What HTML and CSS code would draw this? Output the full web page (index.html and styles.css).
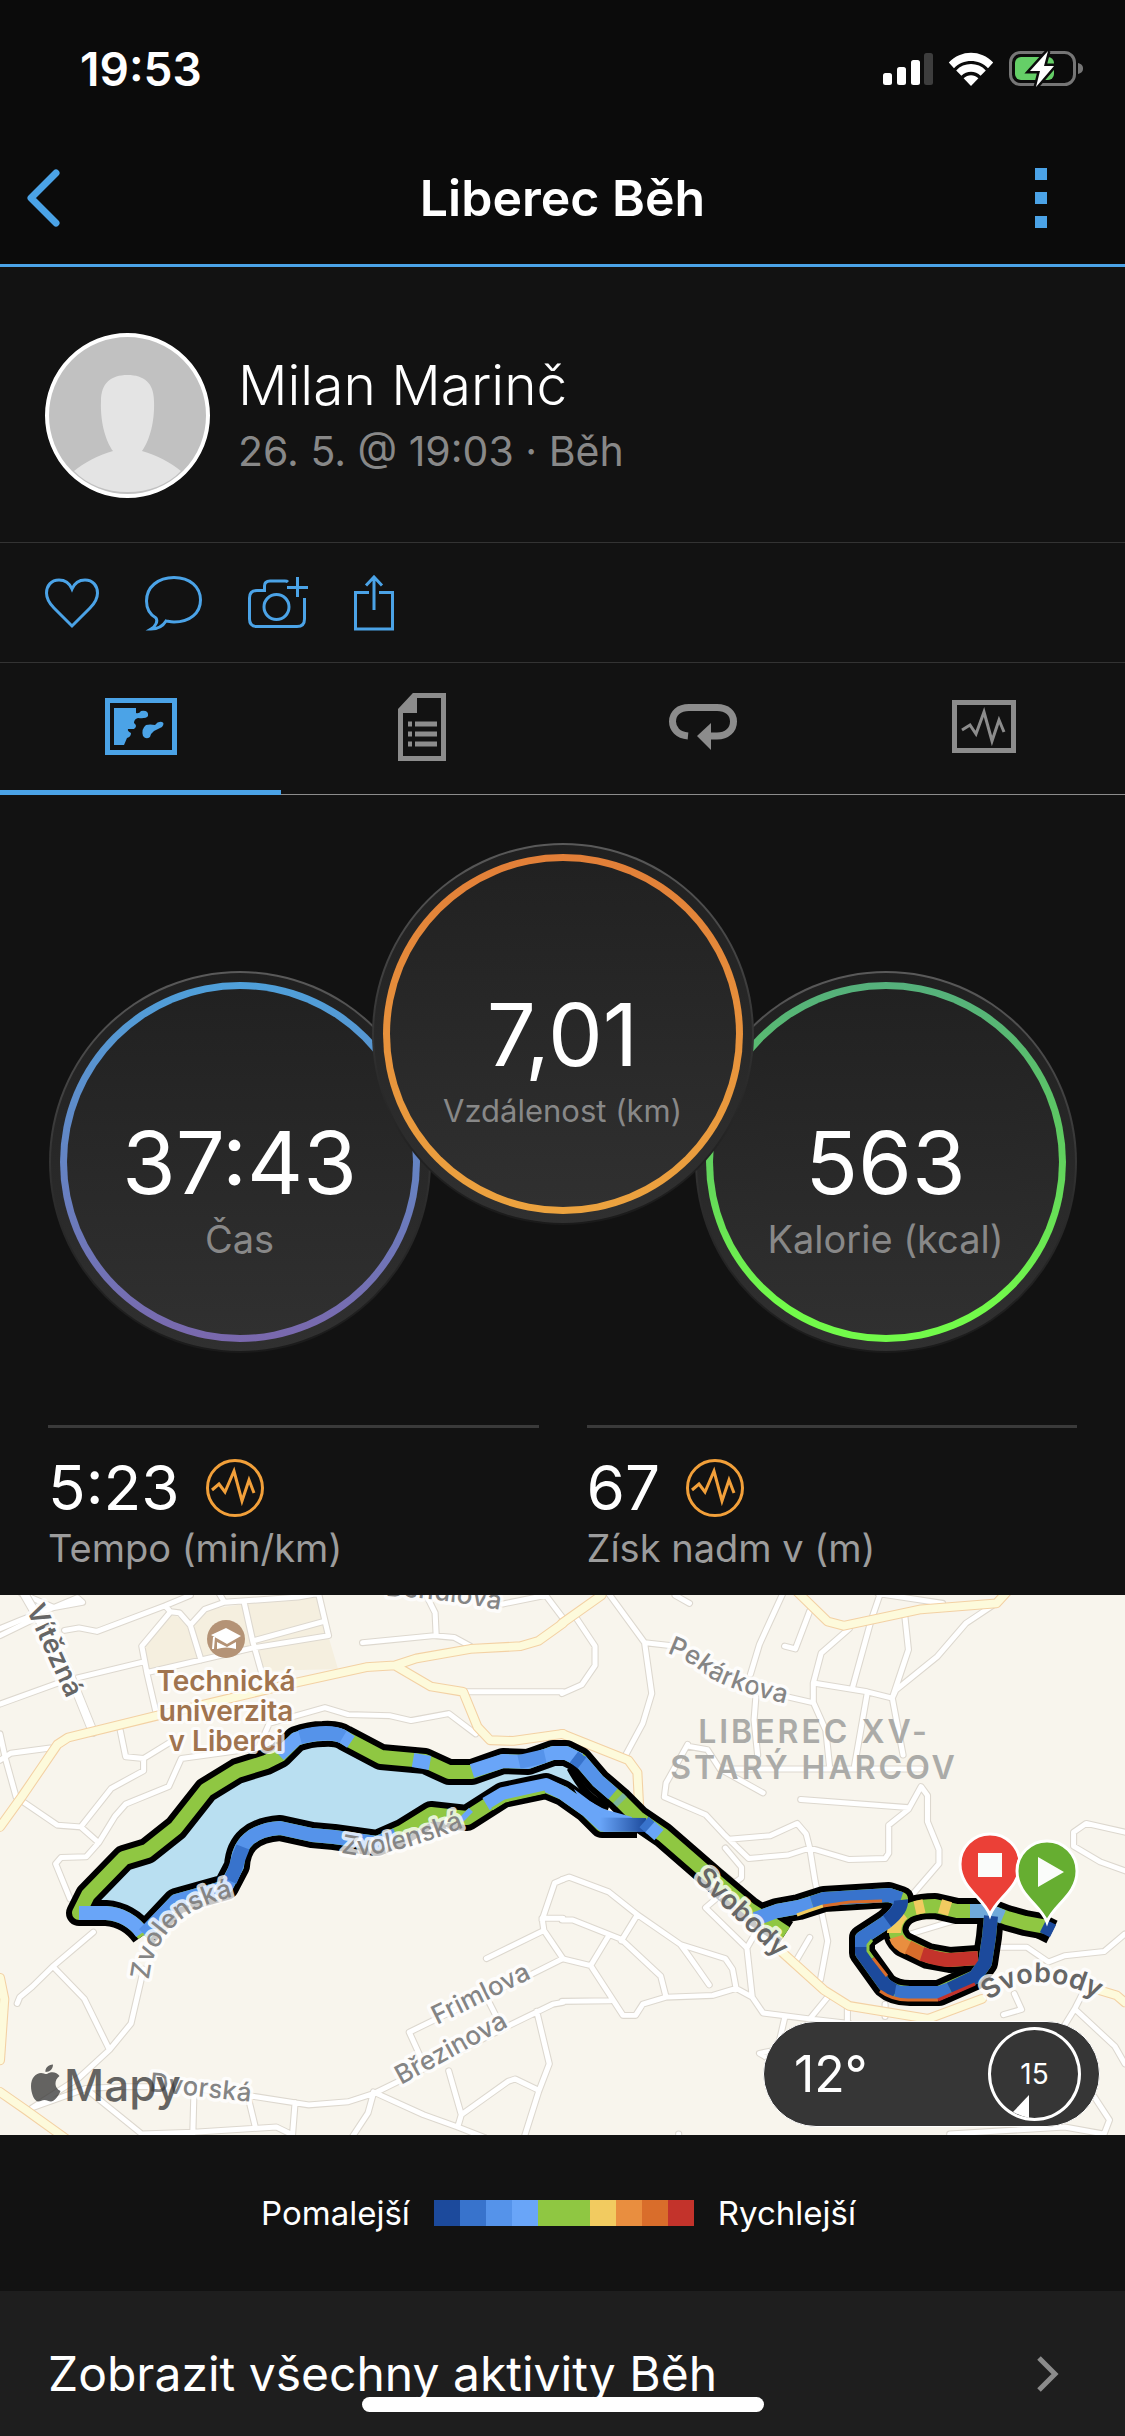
FILE: index.html
```html
<!DOCTYPE html>
<html lang="cs">
<head>
    <meta charset="utf-8">
    <meta name="viewport" content="width=device-width, initial-scale=1">
    <title>Liberec Běh</title>
    <link rel="stylesheet" href="styles.css">
</head>
<body>
    <header class="header">
        <div class="status">
            <span class="time">19:53</span>
            <div class="status-icons">
                <svg width="50" height="34" viewBox="0 0 50 34" fill="#fff">
                    <rect x="0" y="21" width="9" height="12" rx="2.5"/>
                    <rect x="14" y="15" width="9" height="18" rx="2.5"/>
                    <rect x="28" y="8" width="9" height="25" rx="2.5"/>
                    <rect x="41" y="1" width="9" height="32" rx="2.5" fill="#3d3d3d"/>
                </svg>
                <svg width="46" height="34" viewBox="0 0 46 34" fill="#fff">
                    <path d="M0.8 10.6C13 -2.6 33 -2.6 45.2 10.6L40 16.2C31 6.6 15 6.6 6 16.2Z"/>
                    <path d="M8.2 18.4C16 10 30 10 37.8 18.4L32.6 23.8C27.5 18.4 18.5 18.4 13.4 23.8Z"/>
                    <path d="M15.6 26.2C20 22.2 26 22.2 30.4 26.2L23 34Z"/>
                </svg>
                <svg width="74" height="36" viewBox="0 0 74 36">
                    <rect x="1.5" y="1.5" width="64" height="32" rx="10" fill="none" stroke="#767676" stroke-width="3"/>
                    <path d="M69 12C73 13 74 15 74 17.500S73 22 69 23Z" fill="#767676"/>
                    <rect x="6" y="6" width="39" height="23" rx="6" fill="#65cf67"/>
                    <path d="M39 0L21 20H31L27 36L45 15H35Z" fill="#fff" stroke="#0b0b0b" stroke-width="5" paint-order="stroke"/>
                </svg>
            </div>
        </div>
        <nav class="navbar">
            <button class="nav-btn" aria-label="Zpět">
                <svg width="34" height="58" viewBox="0 0 34 58" fill="none" stroke="#4ba3e7" stroke-width="7" stroke-linecap="round" stroke-linejoin="round"><path d="M30 4L5 29L30 54"/></svg>
            </button>
            <h1 class="title">Liberec Běh</h1>
            <button class="nav-btn nav-menu" aria-label="Nabídka">
                <svg width="12" height="60" viewBox="0 0 12 60" fill="#4ba3e7"><path d="M0 0h12v12H0zM0 24h12v12H0zM0 48h12v12H0z"/></svg>
            </button>
        </nav>
    </header>

    <section class="profile">
        <svg class="avatar" viewBox="0 0 165 165">
            <circle cx="82.500" cy="82.500" r="80.500" fill="#c1c1c1" stroke="#fff" stroke-width="4"/>
            <path d="M56 68C56 50 66 42 82.500 42S109 50 109 68C110 92 103 110 97 118C112 122 126 130 136 138C122 152 104 159 82.500 159S43 152 29 138C39 130 53 122 68 118C62 110 55 92 56 68Z" fill="#e4e4e4"/>
        </svg>
        <div class="who">
            <h2 class="name">Milan Marinč</h2>
            <p class="when">26. 5. @ 19:03 · Běh</p>
        </div>
    </section>

    <div class="actions">
        <button aria-label="To se mi líbí">
            <svg width="54" height="56" viewBox="0 0 54 56"><path d="M27 14C24 7 19 5 14 5C6 5 1.500 11 1.500 18C1.500 24 5 29 9 33L27 51L45 33C49 29 52.500 24 52.500 18C52.500 11 48 5 40 5C35 5 30 7 27 14Z"/></svg>
        </button>
        <button aria-label="Komentář">
            <svg width="57" height="56" viewBox="0 0 57 56"><path d="M6 54C11 51 13 46 11 43C4 39 1.500 33 1.500 26C1.500 12 13 2.500 29 2.500S55.500 12 55.500 25S45 47 29 47C26 47 24 46.500 21 46C18 51 13 54 6 54Z"/></svg>
        </button>
        <button aria-label="Přidat fotku">
            <svg width="60" height="56" viewBox="0 0 60 56"><path d="M40 7Q39 6 37 6H22Q16.500 6 16.500 11V15.500H9Q1.500 15.500 1.500 23V44Q1.500 51.500 9 51.500H49Q56.500 51.500 56.500 44V23"/><circle cx="28.500" cy="32" r="12.500"/><path d="M49.500 2V22M39 12.500H60"/></svg>
        </button>
        <button aria-label="Sdílet">
            <svg width="40" height="56" viewBox="0 0 40 56"><path d="M15 17.500H1.500V54H38.500V17.500H25M20 35V3M12 10.500L20 2L28 10.500"/></svg>
        </button>
    </div>

    <nav class="tabs">
        <button class="tab active" aria-label="Mapa">
            <svg width="72" height="57" viewBox="0 0 72 57"><rect x="2.500" y="2.500" width="67" height="52" fill="none" stroke="currentColor" stroke-width="5"/><path d="M9 10H31V15Q34 16 36 13Q44 12 43 18Q41 21 33 20Q29 21 29 25Q33 28 29 31H23Q22 33 26 35Q26 39 22 40L19 47H9Z" fill="currentColor"/><path d="M57 24Q60 25 57 29L49 33Q46 35 45 39Q41 42 38 38Q36 31 41 27Q45 26 50 27Q53 23 57 24Z" fill="currentColor"/></svg>
        </button>
        <button class="tab" aria-label="Podrobnosti">
            <svg width="48" height="68" viewBox="0 0 48 68" fill="none" stroke="currentColor" stroke-width="5"><path d="M16 2.500H45.500V65.500H2.500V17Z"/><path d="M2 16L14 2H19V20H2Z" fill="currentColor" stroke="none"/><path d="M10 31h4M17 31h22M10 41h4M17 41h22M10 51h4M17 51h22"/></svg>
        </button>
        <button class="tab" aria-label="Okruhy">
            <svg width="68" height="46" viewBox="0 0 68 46"><path d="M19 32C9 31 3.500 25 3.500 17.500C3.500 9 10 3.500 20 3.500H48C58 3.500 64.500 9 64.500 17.500S58 32 48 32H41" fill="none" stroke="currentColor" stroke-width="7"/><path d="M28 32L42 19V46Z" fill="currentColor"/></svg>
        </button>
        <button class="tab" aria-label="Grafy">
            <svg width="64" height="53" viewBox="0 0 64 53" fill="none" stroke="currentColor"><rect x="2.500" y="2.500" width="59" height="48" stroke-width="5"/><path d="M10 30L18 25L24 34L32 12L40 41L47 20L52 32" stroke-width="3"/></svg>
        </button>
    </nav>

    <section class="gauges">
        <div class="gauge">
            <div class="ring ring-time">
                <span class="gauge-value">37:43</span>
                <span class="gauge-label">Čas</span>
            </div>
        </div>
        <div class="gauge gauge-top">
            <div class="ring ring-distance">
                <span class="gauge-value">7,01</span>
                <span class="gauge-label small">Vzdálenost (km)</span>
            </div>
        </div>
        <div class="gauge">
            <div class="ring ring-calories">
                <span class="gauge-value">563</span>
                <span class="gauge-label">Kalorie (kcal)</span>
            </div>
        </div>
    </section>

    <section class="stats">
        <div class="stat">
            <div class="stat-value">5:23
                <svg width="58" height="58" viewBox="0 0 58 58" fill="none" stroke="#f2a03a" stroke-width="3"><circle cx="29" cy="29" r="27.500"/><path d="M6 31L13 25L19 33L28 12L36 42L43 21L48 34"/></svg>
            </div>
            <div class="stat-label">Tempo (min/km)</div>
        </div>
        <div class="stat">
            <div class="stat-value">67
                <svg width="58" height="58" viewBox="0 0 58 58" fill="none" stroke="#f2a03a" stroke-width="3"><circle cx="29" cy="29" r="27.500"/><path d="M6 31L13 25L19 33L28 12L36 42L43 21L48 34"/></svg>
            </div>
            <div class="stat-label">Získ nadm v (m)</div>
        </div>
    </section>

    <section class="map">
        <svg class="map-canvas" viewBox="0 0 1125 540">
            <defs>
                <!-- side streets, west and east tile -->
                <path id="west" d="M0 110L60 85L150 50L230 35L215 22L150 50L60 10M0 130L90 85M180 115L220 108L270 118L460 45L530 15M460 45L475 62L395 160L410 240L435 350M475 62L500 65L530 100L560 200M530 100L570 55L625 35L830 20L885 10M625 35L605 0M680 35L705 150L730 240M885 0L915 130L705 165L410 235M705 145L900 90M0 325L170 262L400 205M0 410L15 480L45 590L160 670L225 675L275 720L240 760L170 762L155 780L195 880M0 485L30 465L140 450M335 400L350 475L400 480L400 515L310 565L225 675M275 720L320 645L350 610L470 560L505 480L720 450L750 380L905 335L970 355L1085 358L1145 372L1250 352L1325 410M400 480L480 430M1010 150L1210 130L1265 135L1310 160M1215 130L1212 65L1190 20M1400 40L1520 15L1568 80M1300 290H1568M260 975L150 1070L90 1130L55 1160L48 1178M150 1075L235 1165L305 1310M400 1080L365 1235L305 1310L220 1390L90 1475L240 1420L340 1415L500 1415L690 1440L860 1467L970 1458L1040 1435L1130 1390L1420 1240L1540 1180L1568 1175M250 1430L395 1550L540 1545L770 1530L810 1550M540 1440L537 1550M690 1440L710 1525M822 1460L815 1550M1040 1435L1025 1490L975 1568M1040 1430L1180 1495L1275 1530L1350 1560M1275 1530L1285 1495L1415 1400L1435 1393L1500 1425M1285 1495L1250 1370M1495 1200L1530 1350L1500 1430L1460 1560M1180 1350L1140 1260L1230 1215L1480 1095L1568 1050M1355 1050L1515 970L1568 1050M1515 970L1510 935H1568M1510 940L1545 835L1568 825M1360 1170L1390 1230"/>
                <path id="east" d="M0 295L55 270L92 215V160L40 80M130 10L230 150L250 295L225 380L175 475M230 150L300 158M610 300L695 320M315 15L355 38M615 10L550 155L525 240M880 10L1060 38M885 15L860 90L810 275M690 60L650 168L620 160M800 110L722 180L700 265V320L735 400L745 500M700 265L850 290L920 308L965 170L955 75M920 308L930 285L1045 190L1125 95L1220 30M850 295L815 500M920 308L950 470M540 305L535 370L545 470M350 440L290 550L285 590L400 640L450 695L520 765L630 755L690 735L800 768L900 765L910 750V670L965 625L1000 560L1018 585V660L1050 740V780L970 875M665 597L965 620M350 445L405 455L440 510L560 578M450 510H1000M465 710L580 700L655 665L680 695L690 735L705 830L740 1000L720 1110M455 735L500 790L500 820L480 835L450 810M0 825L20 818L130 860L210 925L330 1010L455 1050L475 1080L485 1135L420 1155L290 1160L225 1180L205 1212H170L80 1070L0 1050M0 940H30L165 995L275 1100L290 1160M210 925L165 1000M130 985L80 1070M330 1010L355 1045L410 1125M400 905L515 1020L530 1160L485 1135M515 1020L540 975M400 905L440 870M530 1160L560 1205L690 1222L740 1160M690 1222L800 1235M690 990L650 1060M0 1172L135 1170M620 1220L600 1310L550 1320L600 1350M970 980L1100 940M1220 1018H1295L1355 1060L1400 1042L1510 1030L1568 980M1260 1150L1280 1195L1230 1210M1568 690L1460 665L1425 690V730L1500 775L1568 800M1400 1240L1430 1190L1450 1150M1430 1195L1540 1300L1568 1350M1480 1440L1525 1510L1510 1550L1400 1530L1080 1550M325 1550V1568M795 1190V1240M900 1180V1215"/>
                <!-- main roads -->
                <path id="mainwest" d="M0 675L60 590L160 440L190 420L430 360L820 265L1020 220L1100 215L1160 195L1310 168L1450 160L1500 145L1568 95M1100 215L1200 275L1290 290L1330 390L1365 428L1430 430L1568 410M0 1105L12 1165L0 1340M0 1430L70 1480L190 1568"/>
                <path id="maineast" d="M0 95L110 15M650 0L740 90L785 102L1000 55L1210 38L1240 5M0 410L185 485L210 520L215 620M600 1020L730 1140L800 1185L1020 1222L1170 1165M1480 1135L1545 1155L1568 1175"/>
                <!-- whole track, under the speed colours -->
                <g id="track">
                    <path d="M144 340C134 326 120 319 106 318H79L88 300L124 263L147 256L176 233L206 195L237 176L266 167L280 160L296 144Q310 139 323 139Q338 138 345 143L381 162L425 166L449 177H472L503 166L528 167L553 158H566L580 165L598 186L619 204L638 223L663 240L716 286L749 314L786 338"/>
                    <path d="M144 340L176 306L201 299L226 292L237 271Q239 236 280 233L312 240L334 242L377 248L402 237L431 219L467 223L503 200L546 191L563 198L587 215L602 230H637"/>
                    <path d="M755 324L777 316L799 312L824 304L889 300L901 304Q902 315 885 328L862 343V358L885 390Q894 398 910 398H939L975 382L985 368L989 342L991 321"/>
                    <path d="M978 363L950 365L928 361L903 349Q889 336 901 321Q910 311 935 311L957 316H989L1007 323L1025 328L1047 332"/>
                </g>
                <path id="vitezna" d="M26 14L76 124"/>
                <path id="pekarkova" d="M667 58Q686 64 706 80T810 114"/>
                <path id="svobody1" d="M694 284L802 386"/>
                <path id="svobody2" d="M989 406Q1038 366 1110 411"/>
                <path id="zvolenska1" d="M149 385C152 345 180 312 240 300"/>
                <path id="zvolenska2" d="M341 257Q375 270 480 226"/>
                <path id="frimlova" d="M437 430L546 376"/>
                <path id="brezinova" d="M401 490L526 422"/>
                <path id="dvorska" d="M149 496L270 509"/>
                <path id="bendlova" d="M386 1Q438 2 520 19"/>
            </defs>

            <rect width="1125" height="540" fill="#f8f5ed"/>
            <path d="M170 18L188 27L200 62L150 75L142 50ZM192 32L205 15L244 9L254 52L202 62ZM246 8L318 0L328 40L338 74L262 76Z" fill="#f5efdf"/>

            <g fill="none" stroke-linejoin="round" stroke-linecap="round">
                <g stroke="#ddd8cf" stroke-width="20">
                    <use href="#west" transform="translate(0 -5) scale(.359 .351)"/>
                    <use href="#east" transform="translate(562 -5) scale(.359 .351)"/>
                </g>
                <g stroke="#fff" stroke-width="14">
                    <use href="#west" transform="translate(0 -5) scale(.359 .351)"/>
                    <use href="#east" transform="translate(562 -5) scale(.359 .351)"/>
                </g>
                <path d="M22 -5L68 75L93 137" stroke="#ddd8cf" stroke-width="10"/>
                <path d="M22 -5L68 75L93 137" stroke="#fff" stroke-width="8"/>
                <g stroke="#f3d1a4" stroke-width="28">
                    <use href="#mainwest" transform="translate(0 -5) scale(.359 .351)"/>
                    <use href="#maineast" transform="translate(562 -5) scale(.359 .351)"/>
                </g>
                <g stroke="#fdfadb" stroke-width="22">
                    <use href="#mainwest" transform="translate(0 -5) scale(.359 .351)"/>
                    <use href="#maineast" transform="translate(562 -5) scale(.359 .351)"/>
                </g>
            </g>

            <path d="M88 312L124 263L147 256L176 233L206 195L237 176L280 160L296 144L323 139L345 143L381 162L425 166L449 177H472L503 166L553 158L585 185L600 210L563 197L538 191L503 200L467 219H431L402 237L377 246L312 240L280 233L248 240L237 250L215 285L176 304L146 338L120 322Z" fill="#b9dff1"/>

            <g class="track">
                <use href="#track" stroke="#000" stroke-width="26"/>
                <path d="M1036 329L1052 337" stroke="#000" stroke-width="25"/>
                <use href="#track" stroke="#8fc742" stroke-width="14"/>
                <path d="M574 194L590 206L607 215L632 222V236L604 237L592 228Z" fill="#69a5f8"/>
                <path class="light" d="M79 318H106C120 319 134 326 142 338"/>
                <path class="light" d="M279 160L296 144Q310 139 323 139Q338 138 345 143L351 147M413 165L430 168M472 176L503 166L528 167L553 158H566L580 165"/>
                <path class="mid" d="M300 142Q330 134 343 142M519 167L545 161M580 165L598 186L613 199"/>
                <path class="blue" d="M574 162L582 168"/>
                <path class="light" d="M618 203L622 207" opacity=".5"/>
                <path class="mid" d="M144 339L176 306L201 299L226 292L237 271Q239 236 280 233L312 240L334 242L377 248L396 240"/>
                <path class="blue" d="M230 286L234 277L239 262L243 252"/>
                <path class="light" d="M464 218L468 222M486 209L503 199L546 190L563 198L587 215L602 229H612"/>
                <path class="thin" stroke="#8fc742" d="M492 214L505 206L545 197"/>
                <path stroke="url(#slow)" d="M600 229.500L646 230"/>
                <path class="blue" d="M644 227L652 234"/>
                <path class="light" d="M650 232L659 240"/>
                <path class="mid" d="M755 324L777 316L799 312L812 308"/>
                <path class="blue" d="M812 308L824 304L889 300L901 304"/>
                <path class="thin" stroke="#f2cb60" d="M797 320L808 316L823 311"/>
                <path class="thin" stroke="#d96d2b" d="M823 311L850 307L882 306"/>

                <path stroke="#f2cb60" d="M894 338Q894 325 903 318M915 313L924 311M940 311L950 314"/>
                <path stroke="#e98e3f" d="M896 342Q898 349 908 353"/>
                <path stroke="#d96d2b" d="M908 352L924 360"/>
                <path stroke="#c3332b" d="M922 359Q940 365 950 365L978 363"/>
                <path stroke="#6fa9d9" d="M970 316H989L1003 322"/>
                <path class="navy" d="M1043 331L1053 336"/>
                <path class="blue" d="M900 310Q896 320 885 328L862 343V352"/>
                <path class="navy" d="M901 305Q902 315 887 326"/>
                <path class="navy" d="M862 352V358L885 390L896 397"/>
                <path class="blue" d="M895 397Q901 398 910 398H939L950 394"/>
                <path class="navy" d="M950 394L975 382L985 368L989 342L991 321"/>
                <path class="thin" stroke="#8fc742" d="M872 345L868 350V356L873 363"/>
                <path class="thin" stroke="#d96d2b" d="M873 363L887 381M880 396Q892 405 908 405H938"/>
                <path class="thin" stroke="#c3332b" d="M938 405L975 389"/>
            </g>
            <linearGradient id="slow" gradientUnits="userSpaceOnUse" x1="600" x2="646" y1="0" y2="0">
                <stop stop-color="#69a5f8"/>
                <stop offset="1" stop-color="#1c4a9c"/>
            </linearGradient>
            <path d="M570 173C582 195 592 206 609 212" fill="none" stroke="#000" stroke-width="7"/>

            <g class="street">
                <text><textPath href="#bendlova">Bendlova</textPath></text>
                <text><textPath href="#pekarkova">Pekárkova</textPath></text>
                <text><textPath href="#zvolenska1">Zvolenská</textPath></text>
                <text><textPath href="#zvolenska2">Zvolenská</textPath></text>
                <text><textPath href="#frimlova">Frimlova</textPath></text>
                <text><textPath href="#brezinova">Březinova</textPath></text>
                <text><textPath href="#dvorska">Dvorská</textPath></text>
            </g>
            <g class="street major">
                <text><textPath href="#vitezna">Vítězná</textPath></text>
                <text><textPath href="#svobody1">Svobody</textPath></text>
                <text><textPath href="#svobody2">Svobody</textPath></text>
            </g>
            <g class="district">
                <text x="814" y="148">LIBEREC XV-</text>
                <text x="814" y="184">STARÝ HARCOV</text>
            </g>
            <circle cx="226" cy="44" r="19" fill="#b49376"/>
            <path d="M211 40L226 33L241 41L227 49ZM217 47L227 52L236 47V54Q226 51 217 54ZM213 42H215L214 54H212Z" fill="#fff"/>
            <g class="place">
                <text x="226" y="96">Technická</text>
                <text x="226" y="126">univerzita</text>
                <text x="226" y="156">v Liberci</text>
            </g>

            <g class="brand">
                <path d="M47 479C51 476 57 477 59.500 481C54 485 54 493 60.500 496C58 502 54 506.500 51 506.500C48.500 506.500 47 505 44.500 505S41 506.500 38 506.500C34 506 31 498 31 491C31 483 36 478 41 478C44 478 45 479.500 47 479ZM45.500 477C45 473 48 470 53 469.500C53 474 50 477 45.500 477Z"/>
                <text x="64" y="506">Mapy</text>
            </g>

            <!-- finish and start pins -->
            <g stroke="#fff" stroke-width="3">
                <path d="M990 320C984 303 960 293 960 269A30 30 0 0 1 1020 269C1020 293 996 303 990 320Z" fill="#eb4037"/>
                <path d="M1047 327C1041 310 1017 300 1017 276A30 30 0 0 1 1077 276C1077 300 1053 310 1047 327Z" fill="#66ae31"/>
            </g>
            <path d="M978 258h24v24h-24zM1038 262L1064 277L1038 292Z" fill="#fafcfa"/>
        </svg>
        <div class="weather">
            <span class="temp">12°</span>
            <div class="wind">15
                <svg class="wind-arrow" width="16" height="24" viewBox="0 0 16 24"><path d="M0 17L16 0V23Q7 21 0 17Z" fill="#fff"/></svg>
            </div>
        </div>
    </section>

    <section class="legend">
        <span>Pomalejší</span>
        <div class="scale">
            <i class="c1"></i><i class="c2"></i><i class="c3"></i><i class="c4"></i><i class="c5"></i><i class="c5"></i><i class="c6"></i><i class="c7"></i><i class="c8"></i><i class="c9"></i>
        </div>
        <span>Rychlejší</span>
    </section>

    <a class="all" href="#">Zobrazit všechny aktivity Běh
        <svg width="22" height="36" viewBox="0 0 22 36" fill="none" stroke="#8c8c8c" stroke-width="5"><path d="M2 2L18 18L2 34"/></svg>
    </a>
    <div class="home"></div>
</body>
</html>
```
FILE: styles.css
```css
* {
    box-sizing: border-box;
}
body {
    margin: 0;
    background: #121212;
    color: #fff;
    font-family: Inter, "Liberation Sans", sans-serif;
}
h1, h2, p {
    margin: 0;
}
svg {
    display: block;
    flex: none;
}
button {
    padding: 0;
    border: 0;
    background: none;
    color: inherit;
    font: inherit;
}

/* header */
.header {
    background: #0b0b0b;
    border-bottom: 3px solid #4ba3e7;
}
.status {
    display: flex;
    justify-content: space-between;
    align-items: center;
    height: 132px;
    padding: 6px 42px 0 80px;
}
.time {
    font-size: 46px;
    font-weight: 600;
}
.status-icons {
    display: flex;
    align-items: center;
    gap: 15px;
}
.navbar {
    display: grid;
    grid-template-columns: 120px 1fr 120px;
    align-items: center;
    height: 132px;
}
.nav-btn {
    display: flex;
    padding-left: 26px;
}
.nav-menu {
    justify-content: flex-end;
    padding: 0 78px 0 0;
}
.title {
    text-align: center;
    font-size: 50px;
    line-height: 60px;
    font-weight: 600;
}

/* profile */
.profile {
    display: flex;
    align-items: center;
    gap: 28px;
    padding: 66px 45px 44px;
    border-bottom: 1px solid #333;
}
.avatar {
    width: 165px;
    height: 165px;
}
.name {
    font-size: 55px;
    line-height: 70px;
    font-weight: 300;
}
.when {
    color: #888;
    font-size: 41px;
    line-height: 62px;
}
.actions {
    display: flex;
    align-items: center;
    gap: 46px;
    height: 120px;
    padding: 0 45px;
    border-bottom: 1px solid #333;
}
.actions svg {
    fill: none;
    stroke: #4ba3e7;
    stroke-width: 3px;
}

/* tabs */
.tabs {
    display: grid;
    grid-template-columns: repeat(4, 1fr);
    height: 132px;
    box-shadow: inset 0 -1px #8c8c8c;
}
.tab {
    display: flex;
    align-items: center;
    justify-content: center;
    border-bottom: 5px solid transparent;
    color: #8c8c8c;
}
.tab.active {
    color: #4ba3e7;
    border-color: #4ba3e7;
}

/* gauges */
.gauges {
    display: flex;
    justify-content: center;
    align-items: flex-end;
    padding: 48px 48px 72px;
}
.gauge {
    width: 382px;
    padding: 9px;
    border: 2px solid transparent;
    border-radius: 50%;
    background: linear-gradient(#202020, #303030) padding-box, linear-gradient(#5a5a5a, #2c2c2c 60%, #1a1a1a) border-box;
}
.gauge-top {
    z-index: 1;
    margin: 0 -59px 128px;
}
.ring {
    display: flex;
    flex-direction: column;
    align-items: center;
    height: 360px;
    padding-top: 126px;
    border: 7px solid transparent;
    border-radius: 50%;
}
.ring-time {
    background: linear-gradient(#212121, #303030) padding-box, linear-gradient(#4fa0da, #7a68ad) border-box;
}
.ring-distance {
    background: linear-gradient(#212121, #303030) padding-box, linear-gradient(#e27f38, #eca33f) border-box;
}
.ring-calories {
    background: linear-gradient(#212121, #303030) padding-box, linear-gradient(#55b07c, #5dc862 40%, #72fa4a 90%) border-box;
}
.gauge-value {
    font-size: 87px;
    line-height: 96px;
}
.gauge-label {
    margin-top: 4px;
    color: #888;
    font-size: 38px;
    line-height: 48px;
}
.gauge-label.small {
    font-size: 31px;
}

/* stats */
.stats {
    display: grid;
    grid-template-columns: 1fr 1fr;
    gap: 48px;
    padding: 0 48px 23px;
}
.stat {
    padding-top: 24px;
    border-top: 3px solid #3a3a3a;
}
.stat-value {
    display: flex;
    align-items: center;
    gap: 26px;
    font-size: 62px;
    line-height: 72px;
}
.stat-label {
    color: #9c9c9c;
    font-size: 38px;
    line-height: 48px;
}

/* map */
.map {
    position: relative;
}
.map-canvas {
    width: 100%;
    height: auto;
}
.track {
    fill: none;
    stroke-width: 14px;
    stroke-linejoin: round;
}
.light {
    stroke: #69a5f8;
}
.mid {
    stroke: #5593ea;
}
.blue {
    stroke: #3873cc;
}
.navy {
    stroke: #1c4a9c;
}
.thin {
    stroke-width: 3px;
}
.street {
    fill: #858585;
    stroke: #fffc;
    stroke-width: 7px;
    stroke-linejoin: round;
    paint-order: stroke;
    font-size: 26px;
    font-weight: 500;
}
.street.major {
    fill: #666;
    font-size: 27px;
    font-weight: 600;
}
.district {
    fill: #ababa8;
    font-size: 32px;
    font-weight: 600;
    letter-spacing: 3px;
    text-anchor: middle;
}
.place {
    fill: #a0744f;
    stroke: #fffc;
    stroke-width: 6px;
    stroke-linejoin: round;
    paint-order: stroke;
    font-size: 28px;
    font-weight: 600;
    text-anchor: middle;
}
.brand {
    fill: #333;
    opacity: .75;
    font-size: 44px;
    font-weight: 500;
}
.weather {
    position: absolute;
    right: 25px;
    bottom: 8px;
    display: flex;
    align-items: center;
    justify-content: space-between;
    width: 337px;
    height: 106px;
    padding: 0 18px 0 30px;
    border: 1px solid #fff;
    border-radius: 53px;
    background: #363636;
}
.temp {
    font-size: 50px;
}
.wind {
    position: relative;
    width: 93px;
    height: 94px;
    border: 3px solid #fff;
    border-radius: 50%;
    font-size: 28px;
    line-height: 88px;
    text-align: center;
}
.wind-arrow {
    position: absolute;
    left: 22px;
    bottom: -1px;
}

/* legend */
.legend {
    display: flex;
    align-items: center;
    justify-content: center;
    gap: 24px;
    height: 156px;
    padding-right: 8px;
    font-size: 33px;
}
.scale {
    display: flex;
}
.scale i {
    width: 26px;
    height: 26px;
}
.c1 { background: #1c4a9c; }
.c2 { background: #3873cc; }
.c3 { background: #5593ea; }
.c4 { background: #69a5f8; }
.c5 { background: #8fc742; }
.c6 { background: #f2cb60; }
.c7 { background: #e98e3f; }
.c8 { background: #d96d2b; }
.c9 { background: #c3332b; }

.all {
    display: flex;
    align-items: center;
    justify-content: space-between;
    padding: 53px 66px 32px 48px;
    background: #1e1e1e;
    color: #fff;
    font-size: 48px;
    line-height: 60px;
    text-decoration: none;
}
.home {
    position: fixed;
    left: 50%;
    bottom: 24px;
    width: 402px;
    height: 15px;
    margin-left: -201px;
    border-radius: 8px;
    background: #fff;
}
```
